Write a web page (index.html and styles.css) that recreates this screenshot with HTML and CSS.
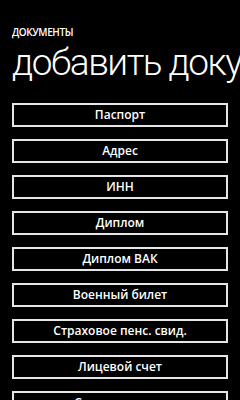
FILE: index.html
```html
<!DOCTYPE html>
<html lang="ru">
<head>
<meta charset="utf-8">
<link rel="stylesheet" href="styles.css">
</head>
<body>
<div class="page">
  <div class="app-title">ДОКУМЕНТЫ</div>
  <div class="page-title">добавить документ</div>
  <div class="buttons">
    <div class="btn">Паспорт</div>
    <div class="btn">Адрес</div>
    <div class="btn">ИНН</div>
    <div class="btn">Диплом</div>
    <div class="btn">Диплом ВАК</div>
    <div class="btn">Военный билет</div>
    <div class="btn">Страховое пенс. свид.</div>
    <div class="btn">Лицевой счет</div>
    <div class="btn">Свидетельство</div>
  </div>
</div>
</body>
</html>
```
FILE: styles.css
```css
html, body {
  margin: 0;
  padding: 0;
  background: #000;
  color: #fff;
  width: 240px;
  height: 400px;
  overflow: hidden;
}
.page {
  font-family: "Open Sans", "Noto Sans", sans-serif;
  padding: 26px 12px 0 12px;
}
.app-title {
  font-size: 10px;
  font-weight: 600;
  line-height: 12px;
  letter-spacing: -0.4px;
}
.page-title {
  font-family: Roboto, "Open Sans", sans-serif;
  font-size: 37px;
  font-weight: 300;
  line-height: 46px;
  letter-spacing: -1.5px;
  margin: 2px -12px 0 0;
  white-space: nowrap;
  overflow: hidden;
}
.buttons {
  margin-top: 17px;
  display: flex;
  flex-direction: column;
  gap: 12px;
}
.btn {
  height: 20px;
  border: 2px solid #e6e6e6;
  display: flex;
  align-items: center;
  justify-content: center;
  font-size: 12px;
  font-weight: 600;
  line-height: 1;
}
```
